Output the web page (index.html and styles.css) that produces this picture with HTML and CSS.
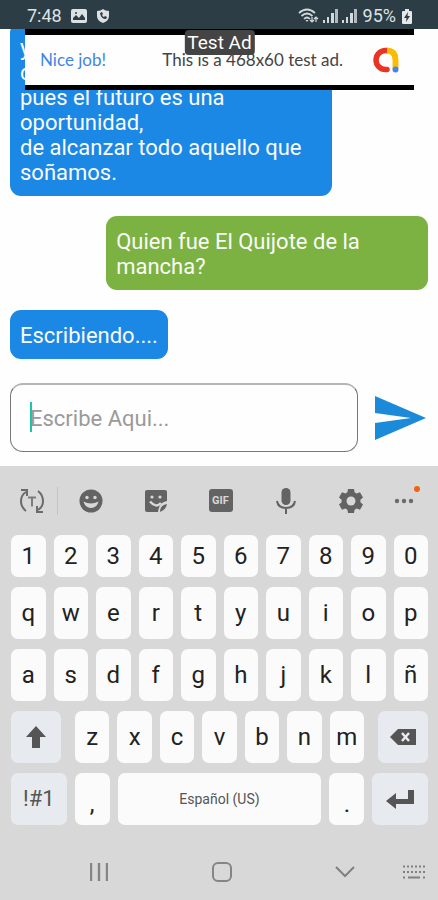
FILE: index.html
```html
<!DOCTYPE html>
<html lang="es">
<head>
<meta charset="utf-8">
<meta name="viewport" content="width=device-width, initial-scale=1">
<title>Chat</title>
<link rel="stylesheet" href="styles.css">
</head>
<body>
<header class="status">
  <span class="status-text">7:48</span>
  <svg class="status-picture" width="16" height="14" viewBox="0 0 16 14"><rect width="16" height="14" rx="2" fill="#dce2e4"/><path d="M2 11V9l3-3 3 3 3-4 3 4v2z" fill="#2d3d45"/><circle cx="5" cy="4" r="1" fill="#2d3d45"/></svg>
  <svg class="status-shield" width="12" height="14" viewBox="0 0 12 14"><path d="M0 2Q4 2 6 0q2 2 6 2v5q0 5-6 7Q0 12 0 7z" fill="#dce2e4"/><path d="M3 4l2-1 1 2-1 1q1 2 2 2l1-1 2 1-1 2Q4 10 3 4z" fill="#2d3d45"/></svg>
  <span class="status-right">
    <svg width="21" height="16" viewBox="0 0 21 16" fill="none" stroke="#d3dadd" stroke-width="1.7"><path d="M1 5q8-7 16 0M3.500 8q5.500-5 11 0M6 11q3-3 6 0"/><path d="M7.500 12h3L9 14z" fill="#d3dadd" stroke="none"/><path d="M14 9v5m-2-2 2 2 2-2M18 14V9m-2 2 2-2 2 2" stroke-width="1.200"/></svg>
    <svg width="15" height="14" viewBox="0 0 15 14" fill="#d3dadd"><path d="M0 11h2v3H0zM4 8h2v6H4zM8 4h3v10H8z"/><path d="M12 0h3v14h-3z" opacity=".8"/></svg>
    <svg width="15" height="14" viewBox="0 0 15 14" fill="#d3dadd"><path d="M0 11h2v3H0zM4 8h2v6H4zM8 4h3v10H8z"/><path d="M12 0h3v14h-3z" opacity=".8"/></svg>
    <span class="status-text">95%</span>
    <svg width="10" height="15" viewBox="0 0 10 15"><path d="M3 0h4v2h2q1 0 1 1v11q0 1-1 1H1q-1 0-1-1V3q0-1 1-1h2z" fill="#e3e8ea"/><path d="M6 3 2 9h2.500L4 13l4-6H5.500z" fill="#2d3d45"/></svg>
  </span>
</header>

<main class="chat">
  <aside class="ad" aria-label="Test Ad">
    <span class="ad-tag">Test Ad</span>
    <a class="ad-link" href="#ad">Nice job!</a>
    <span class="ad-copy">This is a 468x60 test ad.</span>
    <svg class="ad-logo" width="26" height="26" viewBox="0 0 26 26" fill="none" stroke-width="5.500"><path d="M13 3.500q9.500 0 9.500 9.500v9" stroke="#fbbc04"/><path d="M14 3.500h-1.500a9.500 9.500 0 0 0 0 19H14" stroke="#ea3323" stroke-linecap="round"/><path d="M14 3.500q8.500.5 8.500 9.500v9" stroke="#fbbc04"/><circle cx="22.500" cy="22.500" r="3" fill="#4285f4"/></svg>
  </aside>
  <div class="messages">
    <p class="bubble bot">y<br>d<br>pues el futuro es una oportunidad,<br>de alcanzar todo aquello que soñamos.</p>
    <p class="bubble user">Quien fue El Quijote de la mancha?</p>
    <p class="bubble bot typing">Escribiendo....</p>
  </div>
  <form class="composer">
    <label class="field">
      <input type="text" placeholder="Escribe Aqui..." aria-label="Escribe Aqui...">
      <span class="caret"></span>
    </label>
    <button class="send" type="button" aria-label="Enviar"><svg width="51" height="44" viewBox="0 0 51 44"><path d="M0 0 51 22 0 44V27L36 22 0 17z" fill="#1b8ad8"/></svg></button>
  </form>
</main>

<section class="keyboard" aria-label="Teclado">
  <div class="tools">
    <button class="tool first" aria-label="Texto"><svg width="26" height="26" viewBox="0 0 26 26" fill="none" stroke="#6b6b6b" stroke-width="2"><path d="M7 23Q2 19 2 13T7 4M2 2h6v6M19 3q5 4 5 10t-5 9M24 24h-6v-6"/><path d="M9 9.500h8M13 9.500v9" stroke="#7c7c7c"/></svg></button>
    <button class="tool" aria-label="Emoji"><svg width="24" height="24" viewBox="0 0 24 24"><circle cx="12" cy="12" r="11.500" fill="#636363"/><circle cx="8" cy="8.500" r="1.700" fill="#d8d8d8"/><circle cx="16" cy="8.500" r="1.700" fill="#d8d8d8"/><path d="M4.500 12.500q7.500 4 15 0-1.500 6.500-7.500 6.500t-7.500-6.500z" fill="#d8d8d8"/></svg></button>
    <button class="tool" aria-label="Stickers"><svg width="24" height="24" viewBox="0 0 24 24"><path d="M3 1h18q2 0 2 2v9q-8 1-9 11H3q-2 0-2-2V3q0-2 2-2z" fill="#636363"/><path d="M16 23q0-7 7-8-1 6-7 8z" fill="#636363"/><circle cx="8" cy="8" r="1.600" fill="#d8d8d8"/><circle cx="16" cy="8" r="1.600" fill="#d8d8d8"/><path d="M6 12.500q6 7 11 1.500" fill="none" stroke="#d8d8d8" stroke-width="2.500"/></svg></button>
    <button class="tool" aria-label="GIF"><span class="gif">GIF</span></button>
    <button class="tool" aria-label="Voz"><svg width="20" height="28" viewBox="0 0 20 28"><rect x="5.500" y="1" width="9" height="17" rx="4.500" fill="#636363"/><path d="M1 14q1 7 9 7t9-7M10 21v6" fill="none" stroke="#636363" stroke-width="2"/></svg></button>
    <button class="tool" aria-label="Ajustes"><svg width="24" height="24" viewBox="0 0 24 24"><path fill="#636363" d="M9 0h6l.6 3.300 2 1.200L21 3.300l3 5.200-2.600 2.200v2.600l2.600 2.200-3 5.200-3.400-1.200-2 1.200L15 24H9l-.6-3.300-2-1.200L3 20.700l-3-5.200 2.600-2.200v-2.600L0 8.500l3-5.200 3.400 1.200 2-1.200z"/><circle cx="12" cy="12" r="4.500" fill="#d8d8d8"/></svg></button>
    <button class="tool more" aria-label="Más"><svg width="20" height="6" viewBox="0 0 20 6" fill="#6b6b6b"><circle cx="3" cy="3" r="2.200"/><circle cx="10" cy="3" r="2.200"/><circle cx="17" cy="3" r="2.200"/></svg><span class="dot"></span></button>
  </div>
  <div class="keys">
    <div class="row ten numbers"><button>1</button><button>2</button><button>3</button><button>4</button><button>5</button><button>6</button><button>7</button><button>8</button><button>9</button><button>0</button></div>
    <div class="row ten"><button>q</button><button>w</button><button>e</button><button>r</button><button>t</button><button>y</button><button>u</button><button>i</button><button>o</button><button>p</button></div>
    <div class="row ten"><button>a</button><button>s</button><button>d</button><button>f</button><button>g</button><button>h</button><button>j</button><button>k</button><button>l</button><button>ñ</button></div>
    <div class="row shift-row">
      <button class="special" aria-label="Mayúsculas"><svg width="20" height="22" viewBox="0 0 20 22"><path d="M10 0 20 11h-6v11H6V11H0z" fill="#555"/></svg></button>
      <div class="row seven"><button>z</button><button>x</button><button>c</button><button>v</button><button>b</button><button>n</button><button>m</button></div>
      <button class="special" aria-label="Borrar"><svg width="26" height="16" viewBox="0 0 26 16"><path d="M8 0h18v16H8L0 8z" fill="#555"/><path d="m12 4 7 8m0-8-7 8" stroke="#e9ecf0" stroke-width="2.500"/></svg></button>
    </div>
    <div class="row space-row">
      <button class="special symbols">!#1</button><button class="mark">,</button><button class="space">Español (US)</button><button class="mark">.</button>
      <button class="special" aria-label="Intro"><svg width="28" height="19" viewBox="0 0 28 19"><path d="M22 0h6v14H10v5L0 11l10-8v6h12z" fill="#555"/></svg></button>
    </div>
  </div>
  <nav class="nav">
    <button aria-label="Recientes"><svg width="18" height="18" viewBox="0 0 18 18"><path d="M1 0v18M9 0v18M17 0v18" stroke="#858585" stroke-width="2.400"/></svg></button>
    <button aria-label="Inicio"><svg width="20" height="20" viewBox="0 0 20 20"><rect x="1" y="1" width="18" height="18" rx="5" fill="none" stroke="#858585" stroke-width="2"/></svg></button>
    <button aria-label="Ocultar teclado"><svg width="20" height="12" viewBox="0 0 20 12"><path d="m1 1 9 9 9-9" fill="none" stroke="#808080" stroke-width="2"/></svg></button>
    <button class="switch" aria-label="Cambiar teclado"><svg width="22" height="14" viewBox="0 0 22 14" stroke="#808080" stroke-width="2"><path d="M0 1.500h22M0 7h22" stroke-dasharray="2 2"/><path d="M0 12.500h2M5 12.500h12M20 12.500h2"/></svg></button>
  </nav>
</section>
</body>
</html>
```
FILE: styles.css
```css
* { box-sizing: border-box; }

body {
  margin: 0;
  min-height: 100vh;
  display: flex;
  flex-direction: column;
  background: #fefefe;
  font-family: Roboto, "Liberation Sans", sans-serif;
}

button {
  border: 0;
  padding: 0;
  background: none;
  font-family: inherit;
  color: inherit;
}

svg { display: block; flex: none; }

.status {
  height: 29px;
  padding: 3px 26px 0 27px;
  display: flex;
  align-items: center;
  background: #2d3d45;
}

.status-text { font-size: 18px; line-height: 26px; color: #dce2e4; }
.status-picture { margin-left: 9px; }
.status-shield { margin-left: 10px; }
.status-right { margin-left: auto; display: flex; align-items: center; gap: 4px; }
.status-right .status-text { margin: 0 2px; }

.chat {
  position: relative;
  flex: 1 1 0;
  display: flex;
  flex-direction: column;
}

.ad {
  position: absolute;
  top: 0;
  left: 25px;
  right: 24px;
  height: 61px;
  padding: 0 15px;
  display: flex;
  align-items: center;
  border: solid #000;
  border-width: 6px 0 5px;
  background: #fefefe;
  font-family: Lato, sans-serif;
  font-size: 17px;
  line-height: 24px;
}

.ad-link { color: #4285e8; text-decoration: none; flex: 1; }
.ad-copy { color: #444; margin-right: 30px; }

.ad-tag {
  position: absolute;
  top: -5px;
  left: 50%;
  transform: translateX(-50%);
  padding: 0 3px;
  border-radius: 4px;
  background: #444;
  color: #fff;
  font-family: Roboto, sans-serif;
  font-size: 19px;
  line-height: 25px;
  white-space: nowrap;
}

.messages {
  flex: 1 1 0;
  min-height: 0;
  overflow: hidden;
  padding: 0 10px 24px;
  display: flex;
  flex-direction: column;
  justify-content: flex-end;
  gap: 20px;
}

.bubble {
  flex: none;
  width: 77%;
  margin: 0;
  padding: 13px 10px 11px;
  border-radius: 11px;
  color: #fafafa;
  font-size: 22px;
  line-height: 25px;
}

.bot { background: #1c88e5; }
.user { align-self: flex-end; background: #7cb241; }
.typing { width: fit-content; }

.composer {
  display: flex;
  align-items: center;
  gap: 17px;
  padding: 0 12px 14px 10px;
}

.field { position: relative; flex: 1; display: block; }

.field input {
  display: block;
  width: 100%;
  height: 69px;
  padding: 0 20px 0 19px;
  border: 1px solid #777;
  border-top: 2px solid #b5b5b5;
  border-radius: 13px;
  background: #fefefe;
  font-family: inherit;
  font-size: 22px;
}

.field input::placeholder { color: #9a9a9a; }

.caret {
  position: absolute;
  left: 20px;
  top: 19px;
  width: 2px;
  height: 30px;
  background: #18c8a8;
}

.keyboard { background: #d8d8d8; }

.tools {
  height: 69px;
  padding: 0 13px 0 6px;
  display: grid;
  grid-template-columns: 52fr repeat(5, 65fr) 42fr;
  align-items: center;
}

.tool {
  position: relative;
  height: 28px;
  display: flex;
  align-items: center;
  justify-content: center;
}

.first { border-right: 1px solid #c4c4c4; }

.gif {
  width: 24px;
  border-radius: 3px;
  background: #636363;
  color: #d8d8d8;
  font-size: 11px;
  font-weight: 700;
  line-height: 23px;
}

.dot {
  position: absolute;
  top: -1px;
  right: 5px;
  width: 6px;
  height: 6px;
  border-radius: 50%;
  background: #ee6410;
}

.keys { padding: 0 10px 0 11px; display: grid; gap: 10px; }
.row { display: grid; gap: 8px; height: 52px; }
.numbers { height: 42px; }
.ten { grid-template-columns: repeat(10, 1fr); }
.seven { grid-template-columns: repeat(7, 1fr); }
.shift-row { grid-template-columns: 50fr 289fr 50fr; gap: 14px; }
.space-row { grid-template-columns: 56fr 35fr 205fr 35fr 56fr; }

.row button {
  display: flex;
  align-items: center;
  justify-content: center;
  border-radius: 7px;
  background: #fbfbfb;
  color: #222;
  font-size: 24px;
  line-height: 28px;
}

.row .special { background: #e7eaee; }
.row .symbols { color: #555; font-size: 22px; }
.row .space { color: #555; font-size: 14px; }
.row .mark { padding-top: 10px; }

.nav {
  height: 75px;
  padding: 19px 13px 0 37px;
  display: grid;
  grid-template-columns: repeat(3, 123fr) 19fr;
  align-items: center;
  justify-items: center;
}

.nav button { min-width: 0; }
.nav .switch { width: 19px; display: flex; justify-content: flex-end; }
```
